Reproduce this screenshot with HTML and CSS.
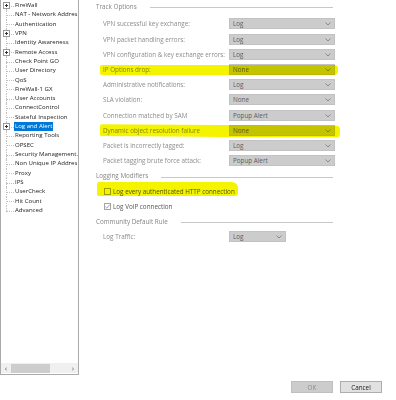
FILE: index.html
```html
<!DOCTYPE html>
<html lang="en">
<head>
    <meta charset="UTF-8">
    <meta name="viewport" content="width=device-width, initial-scale=1.0">
    <title>Log and Alert</title>
    <link rel="stylesheet" href="styles.css">
</head>
<body>
    <div class="dialog">
        <div class="tree">
            <ul class="tree-list">
                <li class="node"><svg class="exp" width="7" height="7" viewBox="0 0 7 7"><rect x="0.5" y="0.5" width="6" height="6" fill="#fff" stroke="#9a9a9a"/><path d="M2 3.5h3M3.5 2v3" stroke="#333"/></svg>FireWall</li>
                <li class="node">NAT - Network Addres</li>
                <li class="node">Authentication</li>
                <li class="node"><svg class="exp" width="7" height="7" viewBox="0 0 7 7"><rect x="0.5" y="0.5" width="6" height="6" fill="#fff" stroke="#9a9a9a"/><path d="M2 3.5h3M3.5 2v3" stroke="#333"/></svg>VPN</li>
                <li class="node">Identity Awareness</li>
                <li class="node"><svg class="exp" width="7" height="7" viewBox="0 0 7 7"><rect x="0.5" y="0.5" width="6" height="6" fill="#fff" stroke="#9a9a9a"/><path d="M2 3.5h3M3.5 2v3" stroke="#333"/></svg>Remote Access</li>
                <li class="node">Check Point GO</li>
                <li class="node">User Directory</li>
                <li class="node">QoS</li>
                <li class="node">FireWall-1 GX</li>
                <li class="node">User Accounts</li>
                <li class="node">ConnectControl</li>
                <li class="node">Stateful Inspection</li>
                <li class="node"><svg class="exp" width="7" height="7" viewBox="0 0 7 7"><rect x="0.5" y="0.5" width="6" height="6" fill="#fff" stroke="#9a9a9a"/><path d="M2 3.5h3M3.5 2v3" stroke="#333"/></svg><span class="selected">Log and Alert</span></li>
                <li class="node">Reporting Tools</li>
                <li class="node">OPSEC</li>
                <li class="node">Security Management.</li>
                <li class="node">Non Unique IP Addres</li>
                <li class="node">Proxy</li>
                <li class="node">IPS</li>
                <li class="node">UserCheck</li>
                <li class="node">Hit Count</li>
                <li class="node">Advanced</li>
            </ul>
            <div class="hscroll">
                <span class="arrow">&#8249;</span>
                <div class="track"><div class="thumb"></div></div>
                <span class="arrow">&#8250;</span>
            </div>
        </div>

        <div class="content">
            <div class="group-title first"><span>Track Options</span><i class="rule"></i></div>

            <div class="row"><span class="label">VPN successful key exchange:</span><div class="select">Log<svg class="chev" width="6" height="4" viewBox="0 0 6 4"><path d="M0.5 0.5l2.5 2.5l2.5-2.5" fill="none" stroke="#8a8a8a"/></svg></div></div>
            <div class="row"><span class="label">VPN packet handling errors:</span><div class="select">Log<svg class="chev" width="6" height="4" viewBox="0 0 6 4"><path d="M0.5 0.5l2.5 2.5l2.5-2.5" fill="none" stroke="#8a8a8a"/></svg></div></div>
            <div class="row"><span class="label">VPN configuration &amp; key exchange errors:</span><div class="select">Log<svg class="chev" width="6" height="4" viewBox="0 0 6 4"><path d="M0.5 0.5l2.5 2.5l2.5-2.5" fill="none" stroke="#8a8a8a"/></svg></div></div>
            <div class="row"><span class="label">IP Options drop:</span><div class="select">None<svg class="chev" width="6" height="4" viewBox="0 0 6 4"><path d="M0.5 0.5l2.5 2.5l2.5-2.5" fill="none" stroke="#8a8a8a"/></svg></div><span class="marker m-ip"></span></div>
            <div class="row"><span class="label">Administrative notifications:</span><div class="select">Log<svg class="chev" width="6" height="4" viewBox="0 0 6 4"><path d="M0.5 0.5l2.5 2.5l2.5-2.5" fill="none" stroke="#8a8a8a"/></svg></div></div>
            <div class="row"><span class="label">SLA violation:</span><div class="select">None<svg class="chev" width="6" height="4" viewBox="0 0 6 4"><path d="M0.5 0.5l2.5 2.5l2.5-2.5" fill="none" stroke="#8a8a8a"/></svg></div></div>
            <div class="row"><span class="label">Connection matched by SAM</span><div class="select">Popup Alert<svg class="chev" width="6" height="4" viewBox="0 0 6 4"><path d="M0.5 0.5l2.5 2.5l2.5-2.5" fill="none" stroke="#8a8a8a"/></svg></div></div>
            <div class="row"><span class="label">Dynamic object resolution failure</span><div class="select">None<svg class="chev" width="6" height="4" viewBox="0 0 6 4"><path d="M0.5 0.5l2.5 2.5l2.5-2.5" fill="none" stroke="#8a8a8a"/></svg></div><span class="marker m-dyn"></span></div>
            <div class="row"><span class="label">Packet is incorrectly tagged:</span><div class="select">Log<svg class="chev" width="6" height="4" viewBox="0 0 6 4"><path d="M0.5 0.5l2.5 2.5l2.5-2.5" fill="none" stroke="#8a8a8a"/></svg></div></div>
            <div class="row"><span class="label">Packet tagging brute force attack:</span><div class="select">Popup Alert<svg class="chev" width="6" height="4" viewBox="0 0 6 4"><path d="M0.5 0.5l2.5 2.5l2.5-2.5" fill="none" stroke="#8a8a8a"/></svg></div></div>

            <div class="group-title"><span>Logging Modifiers</span><i class="rule"></i></div>
            <div class="row check-row"><span class="box"></span><span class="check-label">Log every authenticated HTTP connection</span><span class="marker m-http"></span></div>
            <div class="row check-row"><span class="box checked"><svg width="7" height="7" viewBox="0 0 7 7"><path d="M1.2 3.6l1.6 1.6l3-3.6" fill="none" stroke="#9a9a9a" stroke-width="0.9"/></svg></span><span class="check-label">Log VoIP connection</span></div>

            <div class="group-title"><span>Community Default Rule</span><i class="rule"></i></div>
            <div class="row"><span class="label">Log Traffic:</span><div class="select short">Log<svg class="chev" width="6" height="4" viewBox="0 0 6 4"><path d="M0.5 0.5l2.5 2.5l2.5-2.5" fill="none" stroke="#8a8a8a"/></svg></div></div>

            <div class="buttons">
                <button class="btn" disabled>OK</button>
                <button class="btn">Cancel</button>
            </div>
        </div>
    </div>
</body>
</html>
```

FILE: styles.css
```css
body {
    margin: 0;
    background: #ffffff;
    font-family: "Open Sans", "Liberation Sans", sans-serif;
    font-size: 6.3px;
    color: #1a1a1a;
}
.dialog {
    display: flex;
    height: 400px;
}

/* left tree */
.tree {
    width: 79px;
    height: 375px;
    box-sizing: border-box;
    border: 1px solid #ababab;
    border-top: none;
    display: flex;
    flex-direction: column;
    flex-shrink: 0;
}
.tree-list {
    list-style: none;
    margin: 0;
    padding: 1px 0 0 0;
    flex: 1;
    overflow: hidden;
    font-size: 6.05px;
}
.node {
    position: relative;
    height: 9.32px;
    line-height: 9.32px;
    padding-left: 14px;
    white-space: nowrap;
    overflow: hidden;
}
.node::before {
    content: "";
    position: absolute;
    left: 5px;
    top: 50%;
    width: 8px;
    border-top: 1px dotted #c0c0c0;
}
.node::after {
    content: "";
    position: absolute;
    left: 5px;
    top: 0;
    bottom: 0;
    border-left: 1px dotted #c0c0c0;
}
.node:first-child::after {
    top: 50%;
}
.node:last-child::after {
    bottom: 50%;
}
.exp {
    position: absolute;
    left: 2px;
    top: 1px;
    z-index: 1;
}
.selected {
    background: #0078d7;
    color: #ffffff;
    padding: 1px 1px;
    margin-left: -1px;
}
.hscroll {
    height: 10px;
    margin-bottom: 1px;
    display: flex;
    align-items: center;
    background: #f0f0f0;
}
.arrow {
    width: 10px;
    text-align: center;
    font-size: 8px;
    line-height: 10px;
    color: #606060;
}
.track {
    flex: 1;
    height: 10px;
}
.thumb {
    width: 39px;
    height: 9px;
    margin-top: 0.5px;
    background: #cdcdcd;
}

/* right panel */
.content {
    flex: 1;
    display: flex;
    flex-direction: column;
    margin-left: 17px;
    padding-right: 61px;
}
.group-title {
    display: flex;
    align-items: center;
    height: 15.2px;
    color: #858585;
}
.group-title.first {
    height: 12px;
    margin-bottom: 4.4px;
}
.rule {
    flex: 1;
    height: 0;
    margin-left: 13px;
    margin-right: 2px;
    margin-top: 3px;
    border-top: 1px solid #c8c8c8;
}
.row {
    position: relative;
    display: flex;
    align-items: center;
    height: 15.2px;
}
.label {
    flex: 1;
    padding-left: 7px;
    color: #8c8c8c;
    white-space: nowrap;
}
.select {
    position: relative;
    width: 106px;
    height: 11px;
    box-sizing: border-box;
    border: 1px solid #c2c2c2;
    background: #cccccc;
    color: #5c5c5c;
    line-height: 9px;
    padding-left: 3px;
}
.select.short {
    width: 57px;
    margin-right: 49px;
}
.chev {
    position: absolute;
    right: 3px;
    top: 3px;
}
.check-row {
    padding-left: 8px;
}
.box {
    width: 7px;
    height: 7px;
    box-sizing: border-box;
    border: 1px solid #a5a5a5;
    margin-right: 2px;
    position: relative;
}
.box svg {
    position: absolute;
    left: -1px;
    top: -1px;
}
.check-label {
    color: #555555;
    white-space: nowrap;
}

/* yellow highlighter strokes over the screenshot */
.marker {
    position: absolute;
    background: #f4f400;
    mix-blend-mode: multiply;
    border-radius: 2px 4px 4px 2px;
    pointer-events: none;
}
.m-ip {
    left: 4px;
    right: -3px;
    top: 3px;
    height: 10px;
}
.m-dyn {
    left: 4px;
    right: -5px;
    top: 2px;
    height: 12px;
    transform: rotate(0.3deg);
}
.m-http {
    left: 1px;
    width: 141px;
    top: -1px;
    height: 14px;
    border-radius: 2px 6px 3px 2px;
}

.buttons {
    margin-top: auto;
    margin-bottom: 7px;
    margin-right: -47px;
    display: flex;
    justify-content: flex-end;
    gap: 7px;
}
.btn {
    width: 42px;
    height: 12px;
    padding: 0;
    font-family: inherit;
    font-size: 6.3px;
    border: 1px solid #adadad;
    background: #e1e1e1;
    color: #1a1a1a;
}
.btn:disabled {
    border-color: #bfbfbf;
    background: #cccccc;
    color: #8c8c8c;
}
```
